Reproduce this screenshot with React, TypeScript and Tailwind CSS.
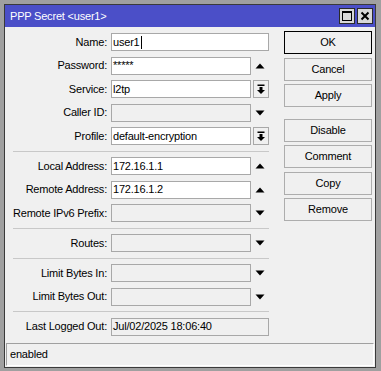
import React from "react";

type Side = "none" | "up" | "down" | "drop";

const FONT = "font-['Liberation_Sans',Arial,sans-serif] text-[11px] tracking-[-0.2px]";

const UpArrow = () => (
  <svg width="10" height="6" viewBox="0 0 10 6">
    <polygon points="0.5,5.5 9.5,5.5 5,0.5" fill="#000" />
  </svg>
);

const DownArrow = () => (
  <svg width="10" height="6" viewBox="0 0 10 6">
    <polygon points="0.5,0.5 9.5,0.5 5,5.5" fill="#000" />
  </svg>
);

const DropIcon = () => (
  <svg width="10" height="11" viewBox="0 0 10 11">
    <rect x="1.5" y="0.5" width="7" height="1.5" fill="#000" />
    <rect x="3.5" y="3" width="3" height="3" fill="#000" />
    <polygon points="1,6 9,6 5,10" fill="#000" />
  </svg>
);

const Field = ({
  label,
  value,
  side = "none",
  disabled = false,
  cursor = false,
}: {
  label: string;
  value?: string;
  side?: Side;
  disabled?: boolean;
  cursor?: boolean;
}) => {
  const wide = side === "none";
  return (
    <div className="flex items-center h-[18px]">
      <div className="w-[102px] text-right text-black whitespace-nowrap">{label}</div>
      <div
        className={`ml-[4px] h-[18px] border border-[#a8a8a8] flex items-center pl-[1px] text-black whitespace-nowrap overflow-hidden ${
          wide ? "w-[158px]" : "w-[140px]"
        } ${disabled ? "bg-[#f0f0f0]" : "bg-white"}`}
      >
        {value}
        {cursor && <span className="inline-block w-[1px] h-[13px] bg-black ml-[1px]" />}
      </div>
      {side === "up" && (
        <div className="w-[18px] h-[18px] flex items-center justify-center">
          <UpArrow />
        </div>
      )}
      {side === "down" && (
        <div className="w-[18px] h-[18px] flex items-center justify-center">
          <DownArrow />
        </div>
      )}
      {side === "drop" && (
        <div className="ml-[2px] w-[16px] h-[18px] border border-[#a8a8a8] flex items-center justify-center">
          <DropIcon />
        </div>
      )}
    </div>
  );
};

const Separator = () => <div className="ml-[8px] w-[256px] h-[1px] bg-[#c8c8c8] my-[5.5px]" />;

const Btn = ({ label, primary = false }: { label: string; primary?: boolean }) => (
  <div
    className={`w-[88px] h-[23px] flex items-center justify-center text-black bg-[#f0f0f0] border ${
      primary ? "border-black" : "border-[#adadad]"
    }`}
  >
    {label}
  </div>
);

export default function App() {
  return (
    <div className={`w-[381px] h-[371px] bg-[#a0a0a0] pt-[4px] pl-[4px] ${FONT}`}>
      <div className="w-[372px] h-[364px] border border-[#3a3a3a] bg-[#f0f0f0] flex flex-col">
        {/* Title bar */}
        <div className="h-[22px] bg-[#4b4fc8] flex items-center pl-[5px] pr-[2px]">
          <span className="text-white flex-1">PPP Secret &lt;user1&gt;</span>
          <div className="flex gap-[2px]">
            <div className="w-[16px] h-[16px] border border-[#2a2a2a] bg-[#d8d8d8] flex items-center justify-center">
              <div className="w-[10px] h-[10px] border border-black border-t-2" />
            </div>
            <div className="w-[16px] h-[16px] border border-[#2a2a2a] bg-[#d8d8d8] flex items-center justify-center">
              <svg width="10" height="10" viewBox="0 0 10 10">
                <path d="M1.5 1.5 L8.5 8.5 M8.5 1.5 L1.5 8.5" stroke="#000" strokeWidth="2" />
              </svg>
            </div>
          </div>
        </div>

        {/* Body */}
        <div className="flex-1 flex">
          <div className="w-[265px] pt-[6px] flex flex-col">
            <div className="flex flex-col gap-[5.5px]">
              <Field label="Name:" value="user1" cursor />
              <Field label="Password:" value="*****" side="up" />
              <Field label="Service:" value="l2tp" side="drop" />
              <Field label="Caller ID:" side="down" disabled />
              <Field label="Profile:" value="default-encryption" side="drop" />
            </div>
            <Separator />
            <div className="flex flex-col gap-[5.5px]">
              <Field label="Local Address:" value="172.16.1.1" side="up" />
              <Field label="Remote Address:" value="172.16.1.2" side="up" />
              <Field label="Remote IPv6 Prefix:" side="down" disabled />
            </div>
            <Separator />
            <Field label="Routes:" side="down" disabled />
            <Separator />
            <div className="flex flex-col gap-[5.5px]">
              <Field label="Limit Bytes In:" side="down" disabled />
              <Field label="Limit Bytes Out:" side="down" disabled />
            </div>
            <Separator />
            <Field label="Last Logged Out:" value="Jul/02/2025 18:06:40" disabled />
          </div>

          <div className="ml-[14px] pt-[4px] flex flex-col gap-[3.5px]">
            <Btn label="OK" primary />
            <Btn label="Cancel" />
            <Btn label="Apply" />
            <div className="h-[4.5px]" />
            <Btn label="Disable" />
            <Btn label="Comment" />
            <Btn label="Copy" />
            <Btn label="Remove" />
          </div>
        </div>

        {/* Status bar */}
        <div className="mx-[1px] mb-[1px] h-[23px] border-t border-l border-[#a0a0a0] border-b-white border-r-white border-b border-r flex items-center pl-[3px] text-black">
          enabled
        </div>
      </div>
    </div>
  );
}
